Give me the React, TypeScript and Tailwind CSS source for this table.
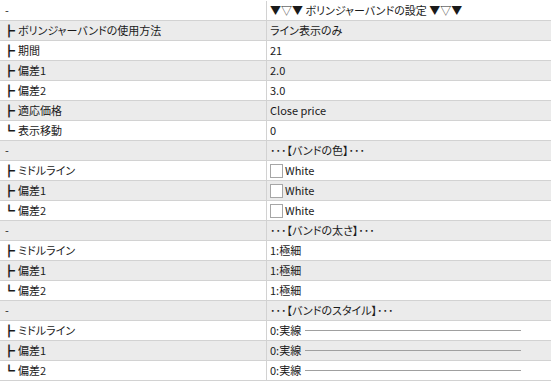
import React from "react";

type Row = { g?: string; l: string; r: React.ReactNode };

const Check = () => (
  <span className="inline-block w-[13px] h-[14px] border border-[#a6a6a6] bg-white mr-[2px] shrink-0" />
);

const LineStyle = ({ t }: { t: string }) => (
  <span className="flex items-center w-full">
    <span>{t}</span>
    <span className="ml-[4px] w-[216px] h-px bg-[#a0a0a0]" />
  </span>
);

const white = (
  <span className="flex items-center">
    <Check />
    <span>White</span>
  </span>
);

const rows: Row[] = [
  { l: "-", r: "▼▽▼ ボリンジャーバンドの設定 ▼▽▼" },
  { g: "┣", l: "ボリンジャーバンドの使用方法", r: "ライン表示のみ" },
  { g: "┣", l: "期間", r: "21" },
  { g: "┣", l: "偏差1", r: "2.0" },
  { g: "┣", l: "偏差2", r: "3.0" },
  { g: "┣", l: "適応価格", r: "Close price" },
  { g: "┗", l: "表示移動", r: "0" },
  { l: "-", r: "･･･【バンドの色】･･･" },
  { g: "┣", l: "ミドルライン", r: white },
  { g: "┣", l: "偏差1", r: white },
  { g: "┗", l: "偏差2", r: white },
  { l: "-", r: "･･･【バンドの太さ】･･･" },
  { g: "┣", l: "ミドルライン", r: "1:極細" },
  { g: "┣", l: "偏差1", r: "1:極細" },
  { g: "┗", l: "偏差2", r: "1:極細" },
  { l: "-", r: "･･･【バンドのスタイル】･･･" },
  { g: "┣", l: "ミドルライン", r: <LineStyle t="0:実線" /> },
  { g: "┣", l: "偏差1", r: <LineStyle t="0:実線" /> },
  { g: "┗", l: "偏差2", r: <LineStyle t="0:実線" /> },
];

export default function App() {
  return (
    <div
      className="w-[551px] h-[381px] bg-white pt-px text-[11px] text-[#1a1a1a] overflow-hidden [font-feature-settings:'palt']"
      style={{ fontFamily: '"Noto Sans CJK JP", "Noto Sans", sans-serif' }}
    >
      {rows.map((row, i) => (
        <div
          key={i}
          className={`flex h-[20px] border-b border-[#d2d2d2] ${i % 2 === 1 ? "bg-[#ebebeb]" : "bg-white"}`}
        >
          <div className={`w-[267px] shrink-0 border-r border-[#d2d2d2] flex items-center whitespace-nowrap ${row.g ? "pl-[3px]" : "pl-[5px]"}`}>
            {row.g && (
              <span className="w-[15px] text-[12px] leading-none font-bold [font-feature-settings:normal]">{row.g}</span>
            )}
            <span>{row.l}</span>
          </div>
          <div className="flex-1 flex items-center pl-[3px] whitespace-nowrap">{row.r}</div>
        </div>
      ))}
    </div>
  );
}
